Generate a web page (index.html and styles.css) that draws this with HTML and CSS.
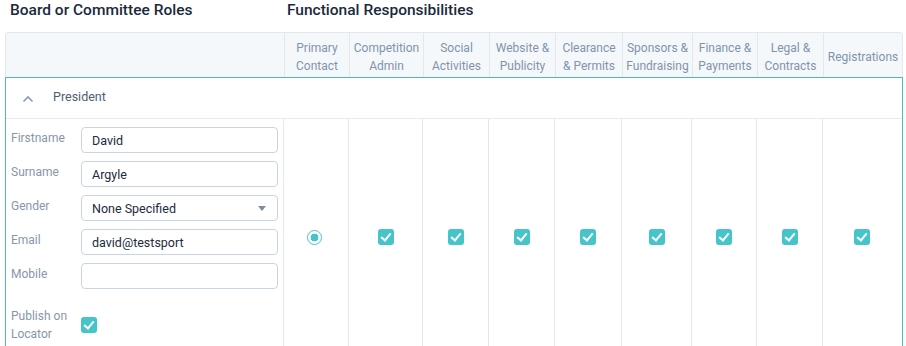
FILE: index.html
```html
<!DOCTYPE html>
<html lang="en">
  <head>
    <meta charset="UTF-8" />
    <meta name="viewport" content="width=device-width, initial-scale=1.0" />
    <title>Committee Roles</title>
    <link rel="stylesheet" href="styles.css">
  </head>
  <body>
    <div class="page">
      <!-- Section titles -->
      <div class="titles">
        <h2 class="title title-roles">Board or Committee Roles</h2>
        <h2 class="title">Functional Responsibilities</h2>
      </div>

      <!-- Column headings -->
      <div class="grid head">
        <div class="cell head-cell first"></div>
        <div class="cell head-cell">Primary Contact</div>
        <div class="cell head-cell">Competition Admin</div>
        <div class="cell head-cell">Social Activities</div>
        <div class="cell head-cell">Website &amp; Publicity</div>
        <div class="cell head-cell">Clearance &amp; Permits</div>
        <div class="cell head-cell">Sponsors &amp; Fundraising</div>
        <div class="cell head-cell">Finance &amp; Payments</div>
        <div class="cell head-cell">Legal &amp; Contracts</div>
        <div class="cell head-cell">Registrations</div>
      </div>

      <!-- Role block -->
      <div class="role">
        <div class="role-bar">
          <svg class="chevron" width="12" height="8" viewBox="0 0 12 8">
            <path d="M1.5 6.5 L6 2 L10.5 6.5" fill="none" stroke="#8a9ab0" stroke-width="1.6" />
          </svg>
          <span class="role-name">President</span>
        </div>

        <div class="grid body">
          <div class="cell first">
            <form class="person">
              <label class="label">Firstname</label>
              <input class="field" type="text" value="David">

              <label class="label">Surname</label>
              <input class="field" type="text" value="Argyle">

              <label class="label">Gender</label>
              <div class="field select">
                <span>None Specified</span>
                <span class="caret"></span>
              </div>

              <label class="label">Email</label>
              <input class="field" type="text" value="david@testsport">

              <label class="label">Mobile</label>
              <input class="field" type="text" value="">

              <label class="label label-publish">Publish on Locator</label>
              <div class="publish"><span class="check"></span></div>
            </form>
          </div>
          <div class="cell tick"><span class="radio"></span></div>
          <div class="cell tick"><span class="check"></span></div>
          <div class="cell tick"><span class="check"></span></div>
          <div class="cell tick"><span class="check"></span></div>
          <div class="cell tick"><span class="check"></span></div>
          <div class="cell tick"><span class="check"></span></div>
          <div class="cell tick"><span class="check"></span></div>
          <div class="cell tick"><span class="check"></span></div>
          <div class="cell tick"><span class="check"></span></div>
        </div>
      </div>
    </div>
  </body>
</html>
```

FILE: styles.css
```css
/* Page */
body {
  margin: 0;
  font-family: Roboto, "Liberation Sans", sans-serif;
  background-color: #fff;
  color: #1c2b3e;
}

.page {
  width: 898px;
  padding-left: 5px;
}

/* Titles above the table */
.titles {
  display: flex;
  height: 32px;
}

.title {
  margin: 0;
  font-size: 15.5px;
  line-height: 20px;
  font-weight: 500;
  color: #1a2a3d;
}

.title-roles {
  width: 277px;
  padding-left: 5px;
}

/* Shared column layout */
.grid {
  display: grid;
  grid-template-columns: 278px 65px 74px 66px 66px 67px 70px 65px 66px 79px;
}

.cell {
  border-left: 1px solid #e4e8ee;
}

.cell.first {
  border-left: none;
}

/* Header row */
.head {
  height: 44px;
  background-color: #f5f8fb;
  border: 1px solid #e3e8ee;
  border-bottom: none;
  border-radius: 4px 4px 0 0;
}

.head-cell {
  display: flex;
  align-items: center;
  justify-content: center;
  text-align: center;
  font-size: 12px;
  line-height: 18px;
  color: #8194ab;
  padding: 3px 2px 0;
}

/* Role block with teal outline */
.role {
  border: 1px solid #4cbcc4;
  border-bottom: none;
}

.role-bar {
  display: flex;
  align-items: center;
  height: 40px;
  border-bottom: 1px solid #e6eaef;
}

.chevron {
  margin-left: 16px;
  margin-top: 1px;
}

.role-name {
  margin-left: 19px;
  margin-bottom: 3px;
  font-size: 12.5px;
  color: #4e5d72;
}

.body {
  height: 236px;
  margin-left: -1px;
}

/* Person details form */
.person {
  display: grid;
  grid-template-columns: 70px 197px;
  row-gap: 8px;
  padding: 8px 0 0 6px;
}

.label {
  font-size: 12px;
  line-height: 20px;
  padding-top: 1px;
  color: #8796ab;
}

.field {
  box-sizing: border-box;
  width: 197px;
  height: 26px;
  margin: 0;
  padding: 0 10px;
  border: 1px solid #c8d5e4;
  border-radius: 4px;
  font-family: inherit;
  font-size: 12.5px;
  color: #1c2b3e;
  outline: none;
}

.select {
  display: flex;
  align-items: center;
  justify-content: space-between;
}

.caret {
  width: 0;
  height: 0;
  margin-right: 1px;
  border-left: 4px solid transparent;
  border-right: 4px solid transparent;
  border-top: 5px solid #7b8ca3;
}

.label-publish {
  width: 60px;
  margin-top: 9px;
  line-height: 18px;
}

.publish {
  display: flex;
  align-items: center;
  margin-top: 9px;
}

/* Ticks */
.tick {
  display: flex;
  align-items: center;
  justify-content: center;
}

.check {
  position: relative;
  width: 16px;
  height: 16px;
  border-radius: 3px;
  background-color: #45c4ca;
}

.check::after {
  content: "";
  position: absolute;
  left: 5px;
  top: 2px;
  width: 4px;
  height: 8px;
  border-right: 2.5px solid #fff;
  border-bottom: 2.5px solid #fff;
  transform: rotate(40deg);
}

.radio {
  box-sizing: border-box;
  width: 15px;
  height: 15px;
  border: 1.5px solid #45c4ca;
  border-radius: 50%;
  background: radial-gradient(circle, #45c4ca 3.6px, #fff 4.2px);
  margin-left: -3px;
}
```
